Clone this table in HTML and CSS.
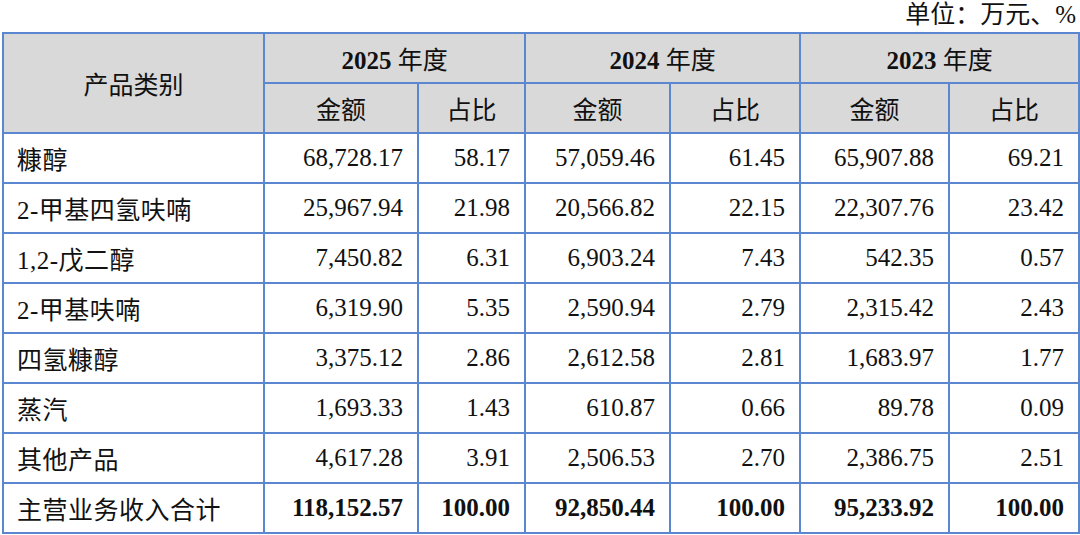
FILE: index.html
```html
<!DOCTYPE html>
<html lang="zh-CN">
<head>
<meta charset="utf-8">
<title>主营业务收入构成</title>
<link rel="stylesheet" href="styles.css">
</head>
<body>
<div class="page">
  <div class="unit">单位：万元、%</div>
  <table class="tbl">
    <colgroup>
      <col class="c-name">
      <col class="c-amt1">
      <col class="c-pct1">
      <col class="c-amt2">
      <col class="c-pct2">
      <col class="c-amt3">
      <col class="c-pct3">
    </colgroup>
    <thead>
      <tr>
        <th rowspan="2" class="hd-name">产品类别</th>
        <th colspan="2" class="hd-year"><b class="yr">2025</b> 年度</th>
        <th colspan="2" class="hd-year"><b class="yr">2024</b> 年度</th>
        <th colspan="2" class="hd-year"><b class="yr">2023</b> 年度</th>
      </tr>
      <tr>
        <th class="hd-sub">金额</th>
        <th class="hd-sub">占比</th>
        <th class="hd-sub">金额</th>
        <th class="hd-sub">占比</th>
        <th class="hd-sub">金额</th>
        <th class="hd-sub">占比</th>
      </tr>
    </thead>
    <tbody>
      <tr><td class="name">糠醇</td><td class="num">68,728.17</td><td class="num">58.17</td><td class="num">57,059.46</td><td class="num">61.45</td><td class="num">65,907.88</td><td class="num">69.21</td></tr>
      <tr><td class="name">2-甲基四氢呋喃</td><td class="num">25,967.94</td><td class="num">21.98</td><td class="num">20,566.82</td><td class="num">22.15</td><td class="num">22,307.76</td><td class="num">23.42</td></tr>
      <tr><td class="name">1,2-戊二醇</td><td class="num">7,450.82</td><td class="num">6.31</td><td class="num">6,903.24</td><td class="num">7.43</td><td class="num">542.35</td><td class="num">0.57</td></tr>
      <tr><td class="name">2-甲基呋喃</td><td class="num">6,319.90</td><td class="num">5.35</td><td class="num">2,590.94</td><td class="num">2.79</td><td class="num">2,315.42</td><td class="num">2.43</td></tr>
      <tr><td class="name">四氢糠醇</td><td class="num">3,375.12</td><td class="num">2.86</td><td class="num">2,612.58</td><td class="num">2.81</td><td class="num">1,683.97</td><td class="num">1.77</td></tr>
      <tr><td class="name">蒸汽</td><td class="num">1,693.33</td><td class="num">1.43</td><td class="num">610.87</td><td class="num">0.66</td><td class="num">89.78</td><td class="num">0.09</td></tr>
      <tr><td class="name">其他产品</td><td class="num">4,617.28</td><td class="num">3.91</td><td class="num">2,506.53</td><td class="num">2.70</td><td class="num">2,386.75</td><td class="num">2.51</td></tr>
      <tr class="total"><td class="name">主营业务收入合计</td><td class="num">118,152.57</td><td class="num">100.00</td><td class="num">92,850.44</td><td class="num">100.00</td><td class="num">95,233.92</td><td class="num">100.00</td></tr>
    </tbody>
  </table>
</div>
</body>
</html>
```

FILE: styles.css
```css
html, body {
  margin: 0;
  padding: 0;
  background: #ffffff;
}

body {
  font-family: "Liberation Serif", "Noto Sans CJK SC", serif;
  color: #111111;
  font-size: 25px;
}

.page {
  width: 1080px;
  height: 535px;
  overflow: hidden;
}

.unit {
  height: 32px;
  line-height: 30px;
  text-align: right;
  padding-right: 4px;
  box-sizing: border-box;
}

.tbl {
  margin-left: 2px;
  width: 1077px;
  border-collapse: collapse;
  table-layout: fixed;
}

.c-name { width: 261px; }
.c-amt1 { width: 154px; }
.c-pct1 { width: 107px; }
.c-amt2 { width: 145px; }
.c-pct2 { width: 130px; }
.c-amt3 { width: 149px; }
.c-pct3 { width: 130px; }

.tbl th,
.tbl td {
  border: 2px solid #5b87d1;
  height: 50px;
  padding: 0 14px;
  box-sizing: border-box;
  white-space: nowrap;
}

.tbl tr {
  height: 50px;
}

.tbl th {
  background: #d9d9d9;
  text-align: center;
  font-weight: 400;
}

.yr {
  font-weight: 700;
}

.tbl td.name {
  text-align: left;
  padding-left: 13px;
  letter-spacing: 0.5px;
}

.tbl td.num {
  text-align: right;
}

.tbl tr.total td.num {
  font-weight: 700;
}
```
